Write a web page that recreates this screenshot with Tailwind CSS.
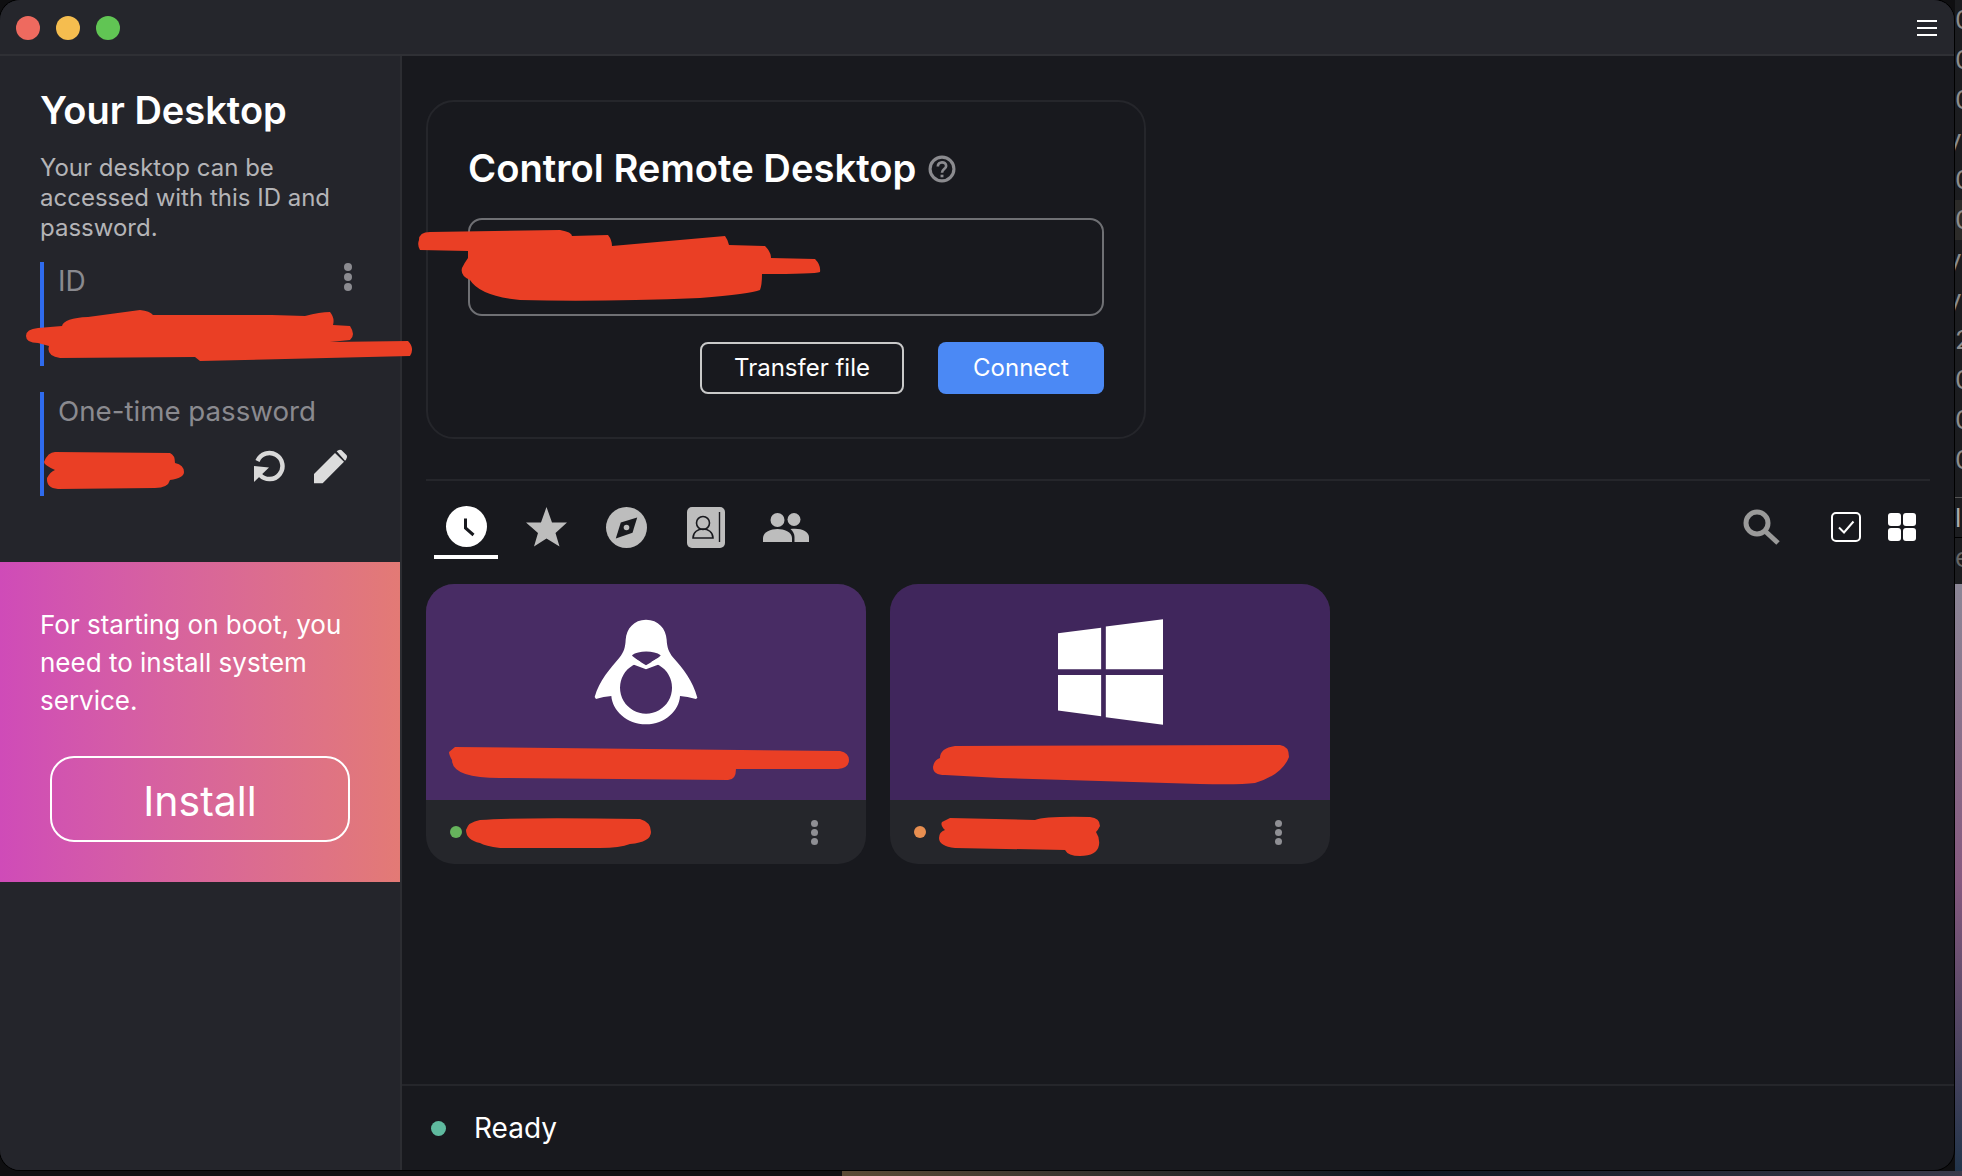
<!DOCTYPE html>
<html lang="en">
<head>
    <meta charset="UTF-8">
    <title>RustDesk</title>
    <script src="https://cdn.jsdelivr.net/npm/@tailwindcss/browser@4"></script>
</head>
<body class="bg-[#0f0f11] overflow-hidden">
<div class="relative w-[1962px] h-[1176px] overflow-hidden font-[Inter,sans-serif]">

    <!-- Stuff behind the window: list rows and wallpaper -->
    <div class="absolute left-[1955px] top-0 w-[7px] h-[584px] overflow-hidden bg-[#1c1d20] text-[#8c8c8c] text-[26px] leading-[40px]">
        <div class="h-[40px]">0</div>
        <div class="h-[40px]">0</div>
        <div class="h-[40px]">0</div>
        <div class="h-[40px] -ml-2">y</div>
        <div class="h-[40px]">0</div>
        <div class="h-[40px] bg-[#2c2b29]">0</div>
        <div class="h-[40px] -ml-2">y</div>
        <div class="h-[40px] -ml-2">y</div>
        <div class="h-[40px]">2</div>
        <div class="h-[40px]">0</div>
        <div class="h-[40px]">0</div>
        <div class="h-[58px] border-b border-[#555]">0</div>
        <div class="h-[40px] border-b border-[#000] text-[#aaa]">l</div>
        <div class="h-[54px] border-b-2 border-[#555] text-[#666]">e</div>
    </div>
    <div class="absolute left-[1955px] top-[584px] w-[7px] h-[592px] bg-linear-to-b from-[#8b8696] via-[#85597f] to-[#20344a]"></div>
    <div class="absolute left-[842px] top-[1171px] w-[1120px] h-[5px] bg-linear-to-r from-[#5b4a35] via-[#0d1620] to-[#3a3a4a]"></div>

    <!-- Window -->
    <div class="relative w-[1954px] h-[1170px] rounded-[20px] overflow-hidden bg-[#18191e] flex flex-col shadow-[0_0_0_1px_#000]">

        <!-- Title bar -->
        <div class="h-[56px] shrink-0 bg-[#25262c] border-b-2 border-[#2f3035] flex items-center justify-between pt-[1px] pl-[16px] pr-[17px]">
            <div class="flex gap-[16px]">
                <span class="w-[24px] h-[24px] rounded-full bg-[#ee6a5f]"></span>
                <span class="w-[24px] h-[24px] rounded-full bg-[#f5bd4f]"></span>
                <span class="w-[24px] h-[24px] rounded-full bg-[#61c554]"></span>
            </div>
            <div class="flex flex-col gap-[5px] w-[20px]">
                <span class="h-[2px] bg-white"></span>
                <span class="h-[2px] bg-white"></span>
                <span class="h-[2px] bg-white"></span>
            </div>
        </div>

        <div class="flex flex-1 min-h-0">
            <!-- Sidebar -->
            <div class="w-[402px] shrink-0 bg-[#24252b] border-r-2 border-[#2c2d32] flex flex-col">
                <div class="px-[40px] pt-[32px]">
                    <h1 class="text-[38px] leading-[44px] font-semibold text-white">Your Desktop</h1>
                    <p class="mt-[21px] text-[24px] leading-[30px] text-[#b4b4b7]">Your desktop can be accessed with this ID and password.</p>
                </div>

                <div class="mx-[40px] mt-[19px] h-[104px] border-l-4 border-[#2f6bed] pl-[14px] pr-[8px] flex justify-between">
                    <span class="text-[28px] leading-[38px] text-[#8a8a8f]">ID</span>
                    <div class="flex flex-col gap-[2px] pt-[1px]">
                        <span class="w-[8px] h-[8px] rounded-full bg-[#8b8b90]"></span>
                        <span class="w-[8px] h-[8px] rounded-full bg-[#8b8b90]"></span>
                        <span class="w-[8px] h-[8px] rounded-full bg-[#8b8b90]"></span>
                    </div>
                </div>

                <div class="mx-[40px] mt-[26px] h-[104px] border-l-4 border-[#2f6bed] pl-[14px] pr-[12px] flex flex-col">
                    <span class="text-[27.7px] leading-[38px] text-[#8a8a8f]">One-time password</span>
                    <div class="flex justify-end items-center gap-[28px] mt-[19px]">
                        <svg class="w-[32px] h-[33px]" viewBox="0 0 32 33" fill="none">
                            <path d="M3.5 11 A13 13 0 1 1 6 25" stroke="#d9d9d9" stroke-width="4.5"/>
                            <path d="M0 16 L0 32 L15 17.5 Z" fill="#d9d9d9"/>
                        </svg>
                        <svg class="w-[34px] h-[35px]" viewBox="220 55 102 105">
                            <path d="M220 158 L220 130 L283 67 L310 93 L246 158 Z M288 62 Q295 55 302 58 L318 74 Q322 80 316 87 L313 90 Z" fill="#dcdcdc"/>
                        </svg>
                    </div>
                </div>

                <!-- Install banner -->
                <div class="mt-[66px] w-[400px] h-[320px] bg-linear-to-r from-[#cf4bb8] to-[#e37a75] px-[40px] pt-[44px]">
                    <p class="text-[26px] leading-[38px] text-white">For starting on boot, you need to install system service.</p>
                    <div class="mx-[10px] mt-[36px] h-[86px] border-2 border-white rounded-[24px] flex items-center justify-center pt-[5px] text-[41px] text-white">Install</div>
                </div>
            </div>

            <!-- Main -->
            <div class="flex-1 min-w-0 flex flex-col">
                <div class="flex-1 min-h-0 pl-[24px] pr-[24px] pt-[44px]">
                    <!-- Connect card -->
                    <div class="w-[720px] h-[339px] border-2 border-[#25262b] rounded-[28px] px-[40px] pt-[40px]">
                        <div class="flex items-center gap-[12px] h-[54px]">
                            <h2 class="text-[38.2px] font-semibold text-white">Control Remote Desktop</h2>
                            <svg class="w-[28px] h-[28px]" viewBox="0 0 27 27" fill="none" stroke="#8b8b8f">
                                <circle cx="13.5" cy="13.5" r="11.5" stroke-width="3"/>
                                <path d="M9.5 11 C9.5 5.8 17.5 5.8 17.5 10.5 C17.5 13.5 13.5 13.5 13.5 17" stroke-width="2.6"/>
                                <path d="M13.5 19 V21.5" stroke-width="2.8"/>
                            </svg>
                        </div>
                        <div class="mt-[22px] h-[98px] border-2 border-[#6f7074] rounded-[14px]"></div>
                        <div class="mt-[26px] flex justify-end gap-[34px]">
                            <div class="w-[204px] h-[52px] border-2 border-[#c9c9c9] rounded-[8px] flex items-center justify-center text-[24px] text-white">Transfer file</div>
                            <div class="w-[166px] h-[52px] bg-[#4b89f5] rounded-[8px] flex items-center justify-center text-[24px] text-white">Connect</div>
                        </div>
                    </div>

                    <div class="mt-[40px] h-[2px] bg-[#25262b]"></div>

                    <!-- Tabs -->
                    <div class="h-[79px] flex items-start justify-between">
                        <div class="flex">
                            <div class="w-[80px] flex flex-col items-center pt-[25px]">
                                <svg class="w-[41px] h-[41px]" viewBox="0 0 41 41" fill="none">
                                    <circle cx="20.5" cy="20.5" r="20.5" fill="#fff"/>
                                    <path d="M19.5 12.5 V22 L27.5 29" stroke="#18191e" stroke-width="3"/>
                                </svg>
                                <span class="mt-[8px] w-[64px] h-[4px] bg-white"></span>
                            </div>
                            <div class="w-[80px] flex justify-center pt-[26px]">
                                <svg class="w-[41px] h-[41px]" viewBox="0 0 41 41">
                                    <path d="M20.5 0 L26 15.5 L41 15.5 L29.5 26 L33.5 39.5 L20.5 31.5 L8 39.5 L12 26 L0 15.5 L15 15.5 Z" fill="#bdbdbd"/>
                                </svg>
                            </div>
                            <div class="w-[80px] flex justify-center pt-[26px]">
                                <svg class="w-[41px] h-[41px]" viewBox="0 0 41 41">
                                    <circle cx="20.5" cy="20.5" r="20.5" fill="#bdbdbd"/>
                                    <path d="M31.2 10.5 L26.5 25.8 L9.8 31.5 L14.8 15.5 Z" fill="#18191e"/>
                                    <circle cx="20.5" cy="20.5" r="2.8" fill="#bdbdbd"/>
                                </svg>
                            </div>
                            <div class="w-[80px] flex justify-center pt-[26px]">
                                <svg class="w-[38px] h-[41px]" viewBox="0 0 38 41" fill="none">
                                    <rect width="38" height="41" rx="5" fill="#bdbdbd"/>
                                    <circle cx="16" cy="16" r="6.5" stroke="#18191e" stroke-width="1.6"/>
                                    <path d="M6 31 C6 25 11 22 16 22 C21 22 26 25 26 31 Z" stroke="#18191e" stroke-width="1.6"/>
                                    <path d="M32.5 5 V35" stroke="#18191e" stroke-width="1.4"/>
                                </svg>
                            </div>
                            <div class="w-[80px] flex justify-center pt-[32px]">
                                <svg class="w-[46px] h-[29px]" viewBox="0 0 46 29" fill="#bdbdbd">
                                    <circle cx="14.5" cy="7" r="7"/>
                                    <circle cx="31" cy="6.5" r="6.5"/>
                                    <path d="M0 29 V25 C0 19 8 16 14.5 16 C21 16 29 19 29 25 V29 Z"/>
                                    <path d="M31.5 29 V24 C31.5 21 30 18 27.5 16 C37 14.5 46 18 46 24 V29 Z"/>
                                </svg>
                            </div>
                        </div>
                        <div class="flex items-center pt-[28px] pr-[14px]">
                            <svg class="w-[37px] h-[36px]" viewBox="0 0 37 36" fill="none" stroke="#9a9a9a">
                                <circle cx="14" cy="14" r="11" stroke-width="5"/>
                                <path d="M22 22 L35 34" stroke-width="5"/>
                            </svg>
                            <svg class="w-[30px] h-[30px] ml-[51px]" viewBox="0 0 30 30" fill="none" stroke="#fff">
                                <rect x="1" y="1" width="28" height="28" rx="4" stroke-width="2"/>
                                <path d="M8 15.5 L13 20.5 L22.5 9.5" stroke-width="2"/>
                            </svg>
                            <div class="ml-[27px] grid grid-cols-2 gap-[2px]">
                                <span class="w-[13px] h-[13px] rounded-[3px] bg-white"></span>
                                <span class="w-[13px] h-[13px] rounded-[3px] bg-white"></span>
                                <span class="w-[13px] h-[13px] rounded-[3px] bg-white"></span>
                                <span class="w-[13px] h-[13px] rounded-[3px] bg-white"></span>
                            </div>
                        </div>
                    </div>

                    <!-- Recent peers -->
                    <div class="mt-[24px] flex gap-[24px]">
                        <div class="w-[440px] h-[280px] rounded-[28px] overflow-hidden bg-[#25262b] flex flex-col">
                            <div class="h-[216px] bg-[#482c64] flex justify-center pt-[35px]">
                                <svg class="w-[104px] h-[106px]" viewBox="72 56 312 318">
                                    <path fill-rule="evenodd" fill="#fff" d="M228 58 C265 58 288 85 290 118 C291 140 296 155 310 172 C340 205 368 240 382 292 L378 296 C360 292 345 288 330 287 C328 330 285 372 228 372 C170 372 127 330 124 287 C110 288 92 292 78 296 L74 290 C88 240 120 205 148 172 C162 155 166 140 167 118 C169 85 192 58 228 58 Z M228 184 A78 78 0 1 0 228.1 184 Z"/>
                                    <path fill="#482c64" d="M186 165 C205 150 252 150 272 165 C270 171 255 178 228 195 C205 180 190 172 186 165 Z"/>
                                    <path fill="#fff" d="M195 175 L228 195 L262 175 L268 192 L228 207 L188 192 Z"/>
                                </svg>
                            </div>
                            <div class="flex-1 flex items-center justify-between pl-[24px] pr-[48px]">
                                <span class="w-[12px] h-[12px] rounded-full bg-[#66b35c]"></span>
                                <div class="flex flex-col gap-[2px]">
                                    <span class="w-[7px] h-[7px] rounded-full bg-[#8f8f94]"></span>
                                    <span class="w-[7px] h-[7px] rounded-full bg-[#8f8f94]"></span>
                                    <span class="w-[7px] h-[7px] rounded-full bg-[#8f8f94]"></span>
                                </div>
                            </div>
                        </div>
                        <div class="w-[440px] h-[280px] rounded-[28px] overflow-hidden bg-[#25262b] flex flex-col">
                            <div class="h-[216px] bg-[#40265c] flex justify-center pt-[35px]">
                                <svg class="w-[105px] h-[106px]" viewBox="533 148 314 316" fill="#fff">
                                    <path d="M533 190 L662 174 L662 298 L533 298 Z"/>
                                    <path d="M676 170 L847 148 L847 298 L676 298 Z"/>
                                    <path d="M533 315 L662 315 L662 438 L533 421 Z"/>
                                    <path d="M676 315 L847 315 L847 464 L676 441 Z"/>
                                </svg>
                            </div>
                            <div class="flex-1 flex items-center justify-between pl-[24px] pr-[48px]">
                                <span class="w-[12px] h-[12px] rounded-full bg-[#e88e50]"></span>
                                <div class="flex flex-col gap-[2px]">
                                    <span class="w-[7px] h-[7px] rounded-full bg-[#8f8f94]"></span>
                                    <span class="w-[7px] h-[7px] rounded-full bg-[#8f8f94]"></span>
                                    <span class="w-[7px] h-[7px] rounded-full bg-[#8f8f94]"></span>
                                </div>
                            </div>
                        </div>
                    </div>
                </div>

                <!-- Status bar -->
                <div class="h-[86px] shrink-0 border-t-2 border-[#25262b] flex items-center pl-[29px]">
                    <span class="w-[15px] h-[15px] rounded-full bg-[#5fba9f]"></span>
                    <span class="ml-[28px] text-[28px] text-white">Ready</span>
                </div>
            </div>
        </div>
    </div>

    <!-- Red redaction scribbles painted on top of the screenshot -->
    <svg class="absolute left-0 top-0 w-[1962px] h-[1176px] pointer-events-none" viewBox="0 0 1962 1176" fill="#ea3f25">
        <path d="M26 336 Q26 329 38 328 L62 326 Q64 318 88 317 L140 310 Q150 311 153 315 L272 315 L305 316 Q320 312 330 312 Q335 318 333 325 L350 326 Q356 335 350 340 L330 342 L408 341 Q415 348 410 356 L200 361 L195 357 L60 358 Q46 356 49 346 L38 343 Q26 343 26 336 Z"/>
        <path d="M55 452 L170 453 Q175 455 175 463 Q184 465 184 472 Q184 478 170 480 Q168 488 155 488 L58 489 Q46 488 47 478 Q50 472 55 470 Q44 465 44 462 Q48 452 55 452 Z"/>
        <path d="M419 240 Q419 232 430 232 L560 230 Q572 232 572 236 L608 235 Q612 240 612 246 L725 236 Q728 240 729 245 L765 246 Q771 252 771 258 L815 259 Q821 265 820 272 Q815 274 762 274 Q762 285 760 290 Q750 294 700 298 Q600 302 520 300 Q480 296 470 280 Q460 276 462 268 Q465 262 468 258 L468 251 L420 250 Q417 245 419 240 Z"/>
        <path d="M455 747 L840 751 Q849 753 849 760 Q849 768 838 769 L736 769 Q736 780 728 780 L500 778 Q452 778 452 760 Q449 755 449 752 Z"/>
        <path d="M480 820 Q520 817 640 819 Q651 822 651 832 Q651 842 630 844 Q620 848 600 848 L500 848 Q485 846 480 843 Q466 840 466 830 Q468 822 480 820 Z"/>
        <path d="M955 746 L1280 745 Q1289 746 1289 757 Q1282 775 1255 783 Q1240 785 1200 784 L1000 778 L945 775 Q933 775 933 767 Q934 760 940 758 Q940 748 955 746 Z"/>
        <path d="M950 818 L1035 820 Q1045 816 1090 817 Q1100 818 1100 826 Q1098 830 1096 832 Q1100 838 1099 845 Q1097 856 1080 856 Q1068 856 1065 850 L955 848 Q939 846 939 838 Q939 832 945 830 Q940 825 942 822 Z"/>
    </svg>
</div>
</body>
</html>
